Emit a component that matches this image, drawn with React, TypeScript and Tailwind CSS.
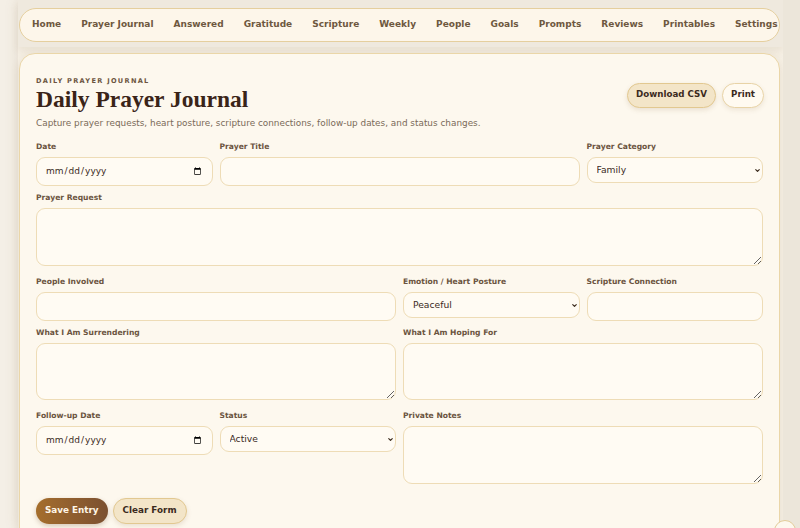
import { FC } from 'react';
import { ChevronDown } from 'lucide-react';

const navItems = [
  'Home',
  'Prayer Journal',
  'Answered',
  'Gratitude',
  'Scripture',
  'Weekly',
  'People',
  'Goals',
  'Prompts',
  'Reviews',
  'Printables',
  'Settings',
];

const labelCls = 'block text-[7.6px] leading-[10px] font-bold text-[#6b5440] mb-[5px]';
const inputCls =
  'block w-full h-[29px] rounded-[9px] border border-[#eedcb6] bg-[#fffbf3] px-[8px] text-[9px] text-[#3b2a1d] outline-none';
const selectCls =
  'block w-full h-[26px] appearance-none rounded-[9px] border border-[#eedcb6] bg-[#fffbf3] px-[9px] text-[9.2px] text-[#3b2a1d] outline-none';
const areaCls =
  'block w-full mb-[4px] rounded-[9px] border border-[#eedcb6] bg-[#fffbf3] px-[9px] py-[6px] text-[9.2px] text-[#3b2a1d] outline-none';

const Select: FC<{ options: string[] }> = ({ options }) => (
  <div className="relative">
    <select className={selectCls} defaultValue={options[0]}>
      {options.map((o) => (
        <option key={o}>{o}</option>
      ))}
    </select>
    <ChevronDown
      size={7}
      strokeWidth={4}
      className="pointer-events-none absolute right-[2px] top-[10px] text-[#3b2a1d]"
    />
  </div>
);

const App: FC = () => {
  return (
    <div
      className="relative h-[528px] overflow-hidden bg-[#f4efe6] text-[#3b2a1d]"
      style={{ fontFamily: '"DejaVu Sans", Verdana, sans-serif' }}
    >
      <div className="flex h-full">
        <div className="w-[18px] shrink-0" />
        <div className="w-[765px] shrink-0 bg-[#f6f0e5] shadow-[0_0_14px_rgba(120,90,40,0.12)]">
          {/* header */}
          <div className="bg-[#efe9de] pt-2 pb-[5px] pl-px pr-[3px] shadow-[0_4px_8px_rgba(120,90,40,0.10)]">
            <nav className="flex h-[34px] items-center overflow-hidden rounded-full border border-[#e5cf9e] bg-[#fdf6ea] pl-[2px]">
              {navItems.map((item) => (
                <span
                  key={item}
                  className="shrink-0 px-[10px] text-[9px] font-bold text-[#6e5840] whitespace-nowrap"
                >
                  {item}
                </span>
              ))}
            </nav>
          </div>

          {/* card */}
          <div className="ml-px mr-[3px] mt-[6px] rounded-t-[16px] border border-[#ead6a8] bg-[#fdf8ee] px-4 pt-[23px] pb-6 shadow-[0_2px_10px_rgba(120,90,40,0.12)]">
            <div className="flex items-center justify-between">
              <div>
                <div className="text-[6.6px] leading-[9px] font-bold tracking-[1.3px] text-[#6b5440]">
                  DAILY PRAYER JOURNAL
                </div>
                <h1
                  className="text-[23.5px] leading-[27px] font-bold text-[#3a2418]"
                  style={{ fontFamily: '"Liberation Serif", "Times New Roman", serif' }}
                >
                  Daily Prayer Journal
                </h1>
              </div>
              <div className="flex gap-[6px] mr-[-1px]">
                <button className="h-[25px] rounded-full border border-[#e2c890] bg-[#f3e5c8] px-[8px] text-[8.7px] font-bold text-[#3b2a1d] shadow-[0_2px_5px_rgba(120,90,40,0.15)]">
                  Download CSV
                </button>
                <button className="h-[25px] rounded-full border border-[#e8d3a6] bg-[#fffaf0] px-[8px] text-[8.7px] font-bold text-[#3b2a1d] shadow-[0_2px_5px_rgba(120,90,40,0.12)]">
                  Print
                </button>
              </div>
            </div>
            <p className="mt-[4px] text-[8.9px] leading-[13px] text-[#7a6a58]">
              Capture prayer requests, heart posture, scripture connections, follow-up dates, and status changes.
            </p>

            <div className="mt-[12px] grid grid-cols-4 gap-x-[7px] gap-y-[7px] items-start">
              <div>
                <label className={labelCls}>Date</label>
                <input type="date" className={inputCls} />
              </div>
              <div className="col-span-2">
                <label className={labelCls}>Prayer Title</label>
                <input type="text" className={inputCls} />
              </div>
              <div>
                <label className={labelCls}>Prayer Category</label>
                <Select options={['Family', 'Health', 'Work']} />
              </div>

              <div className="col-span-4">
                <label className={labelCls}>Prayer Request</label>
                <textarea className={areaCls + ' h-[58px]'} />
              </div>

              <div className="col-span-2">
                <label className={labelCls}>People Involved</label>
                <input type="text" className={inputCls} />
              </div>
              <div>
                <label className={labelCls}>Emotion / Heart Posture</label>
                <Select options={['Peaceful', 'Anxious', 'Grateful']} />
              </div>
              <div>
                <label className={labelCls}>Scripture Connection</label>
                <input type="text" className={inputCls} />
              </div>

              <div className="col-span-2">
                <label className={labelCls}>What I Am Surrendering</label>
                <textarea className={areaCls + ' h-[57px]'} />
              </div>
              <div className="col-span-2">
                <label className={labelCls}>What I Am Hoping For</label>
                <textarea className={areaCls + ' h-[57px]'} />
              </div>

              <div>
                <label className={labelCls}>Follow-up Date</label>
                <input type="date" className={inputCls} />
              </div>
              <div>
                <label className={labelCls}>Status</label>
                <Select options={['Active', 'Answered', 'Waiting']} />
              </div>
              <div className="col-span-2">
                <label className={labelCls}>Private Notes</label>
                <textarea className={areaCls + ' h-[58px]'} />
              </div>
            </div>

            <div className="mt-[10px] flex gap-[5px]">
              <button className="h-[26px] rounded-full bg-gradient-to-r from-[#a56e2c] to-[#7b5030] px-[9px] text-[8.8px] font-bold text-[#fff6e6] shadow-[0_2px_5px_rgba(100,60,20,0.25)]">
                Save Entry
              </button>
              <button className="h-[26px] rounded-full border border-[#e2c890] bg-[#f3e5c8] px-[9px] text-[8.8px] font-bold text-[#3b2a1d] shadow-[0_2px_5px_rgba(120,90,40,0.15)]">
                Clear Form
              </button>
            </div>
          </div>
        </div>
        <div className="flex-1 bg-[#ece6da]" />
      </div>
      <div className="absolute right-[4px] bottom-[-14px] h-[22px] w-[22px] rounded-full border border-[#e3cc99] bg-[#fdf8ee]" />
    </div>
  );
};

export default App;
